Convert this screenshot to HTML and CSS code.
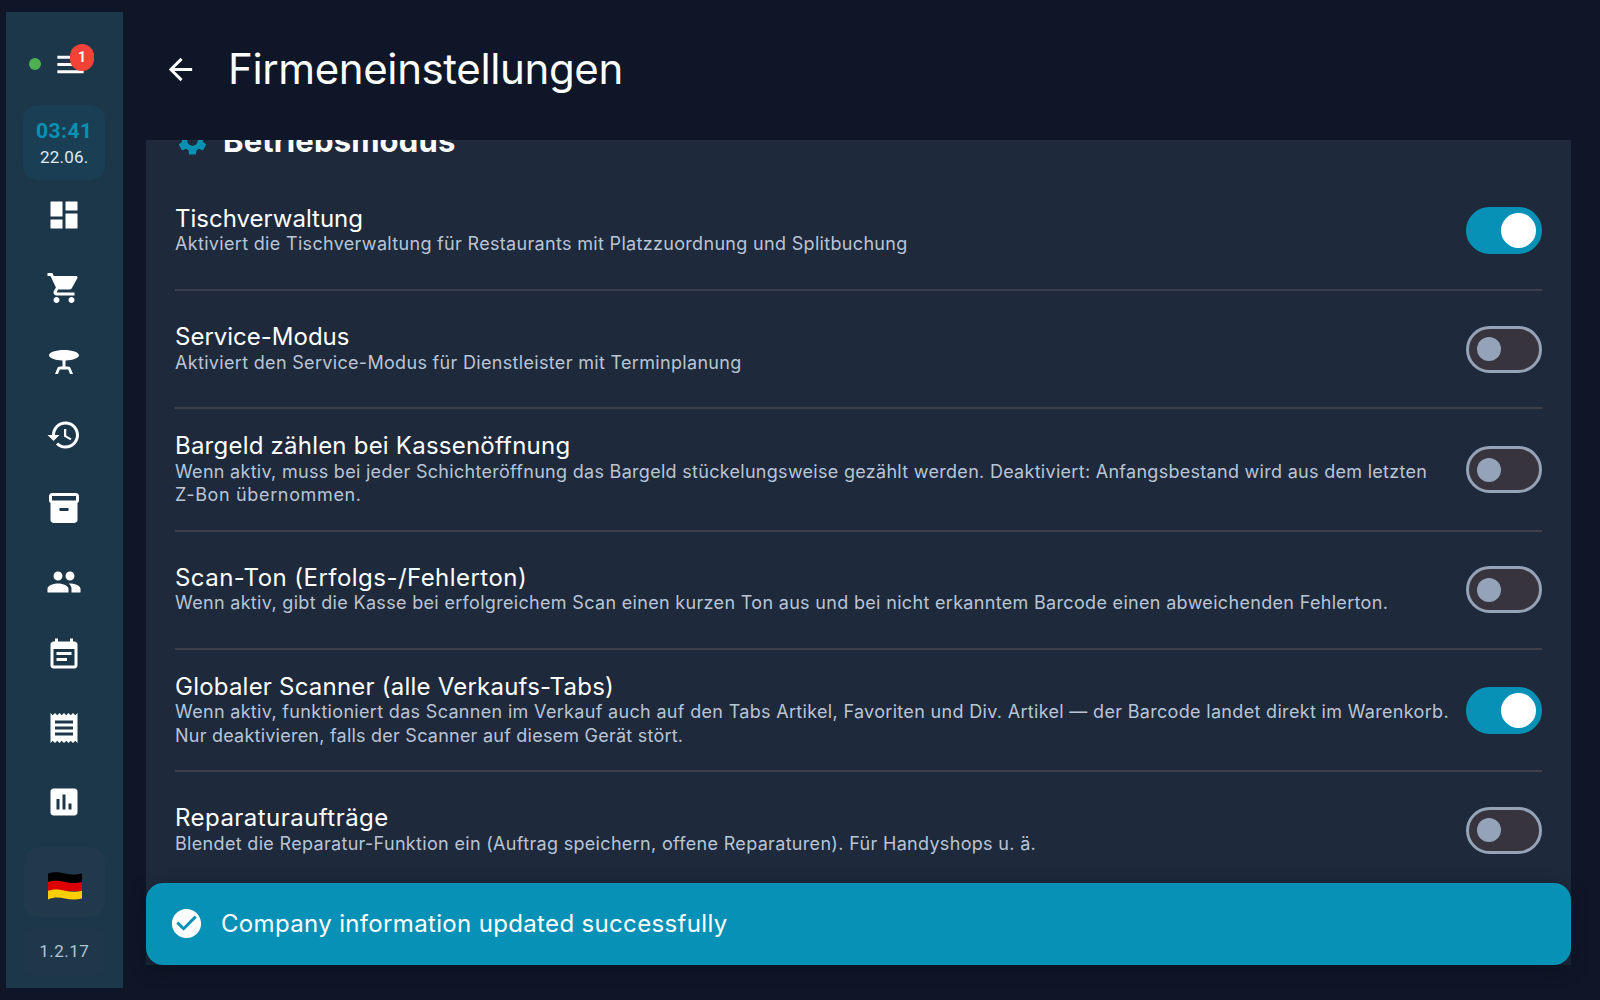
FILE: index.html
```html
<!DOCTYPE html>
<html lang="de">
<head>
<meta charset="utf-8">
<title>Firmeneinstellungen</title>
<link rel="stylesheet" href="styles.css">
</head>
<body>
<div class="app">
  <aside class="sidebar">
    <div class="status">
      <span class="online"></span>
      <span class="menu">
        <svg class="icon" viewBox="0 0 24 24"><path d="M3 18h18v-2H3v2zm0-5h18v-2H3v2zm0-7v2h18V6H3z"/></svg>
        <span class="badge">1</span>
      </span>
    </div>
    <div class="clock"><b>03:41</b><span>22.06.</span></div>
    <nav class="nav">
      <a><svg class="icon" viewBox="0 0 24 24"><path d="M3 13h8V3H3v10zm0 8h8v-6H3v6zm10 0h8V11h-8v10zm0-18v6h8V3h-8z"/></svg></a>
      <a><svg class="icon" viewBox="0 0 24 24"><path d="M7 18c-1.1 0-1.99.9-1.99 2S5.9 22 7 22s2-.9 2-2-.9-2-2-2zM1 2v2h2l3.6 7.59-1.35 2.45c-.16.28-.25.61-.25.96 0 1.1.9 2 2 2h12v-2H7.42c-.14 0-.25-.11-.25-.25l.03-.12.9-1.63h7.45c.75 0 1.41-.41 1.75-1.03l3.58-6.49c.08-.14.12-.31.12-.48 0-.55-.45-1-1-1H5.21l-.94-2H1zm16 16c-1.1 0-1.99.9-1.99 2s.89 2 1.99 2 2-.9 2-2-.9-2-2-2z"/></svg></a>
      <a><svg class="icon" viewBox="0 0 24 24"><path d="M22 7.5C22 5.57 17.52 4 12 4S2 5.57 2 7.5c0 1.81 3.95 3.31 9 3.48V15H9.35c-.82 0-1.55.5-1.86 1.26L6 20h2l1.2-3h5.6l1.2 3h2l-1.5-3.74c-.3-.76-1.03-1.26-1.85-1.26H13v-4.02c5.05-.17 9-1.67 9-3.48z"/></svg></a>
      <a><svg class="icon" viewBox="0 0 24 24"><path d="M13 3c-4.97 0-9 4.03-9 9H1l3.89 3.89.07.14L9 12H6c0-3.87 3.13-7 7-7s7 3.13 7 7-3.13 7-7 7c-1.93 0-3.68-.79-4.94-2.06l-1.42 1.42C8.27 19.99 10.51 21 13 21c4.97 0 9-4.03 9-9s-4.03-9-9-9zm-1 5v5l4.28 2.54.72-1.21-3.5-2.08V8H12z"/></svg></a>
      <a><svg class="icon" viewBox="0 0 24 24"><path d="M20 2H4c-1 0-2 .9-2 2v3.01c0 .72.43 1.34 1 1.69V20c0 1.1 1.1 2 2 2h14c.9 0 2-.9 2-2V8.7c.57-.35 1-.97 1-1.69V4c0-1.1-1-2-2-2zm-5 12H9v-2h6v2zm5-7H4V4h16v3z"/></svg></a>
      <a><svg class="icon" viewBox="0 0 24 24"><path d="M16 11c1.66 0 2.99-1.34 2.99-3S17.66 5 16 5s-3 1.34-3 3 1.34 3 3 3zm-8 0c1.66 0 2.99-1.34 2.99-3S9.66 5 8 5 5 6.34 5 8s1.34 3 3 3zm0 2c-2.33 0-7 1.17-7 3.5V19h14v-2.5c0-2.33-4.67-3.5-7-3.5zm8 0c-.29 0-.62.02-.97.05 1.16.84 1.97 1.97 1.97 3.45V19h6v-2.5c0-2.33-4.67-3.5-7-3.5z"/></svg></a>
      <a><svg class="icon" viewBox="0 0 24 24"><path d="M17 10H7v2h10v-2zm2-7h-1V1h-2v2H8V1H6v2H5c-1.11 0-1.99.9-1.99 2L3 19c0 1.1.89 2 2 2h14c1.1 0 2-.9 2-2V5c0-1.1-.9-2-2-2zm0 16H5V8h14v11zm-5-5H7v2h7v-2z"/></svg></a>
      <a><svg class="icon" viewBox="0 0 24 24"><path d="M18 17H6v-2h12v2zm0-4H6v-2h12v2zm0-4H6V7h12v2zM3 22l1.5-1.5L6 22l1.5-1.5L9 22l1.5-1.5L12 22l1.5-1.5L15 22l1.5-1.5L18 22l1.5-1.5L21 22V2l-1.5 1.5L18 2l-1.5 1.5L15 2l-1.5 1.5L12 2l-1.5 1.5L9 2 7.5 3.5 6 2 4.5 3.5 3 2v20z"/></svg></a>
      <a><svg class="icon" viewBox="0 0 24 24"><path d="M19 3H5c-1.1 0-2 .9-2 2v14c0 1.1.9 2 2 2h14c1.1 0 2-.9 2-2V5c0-1.1-.9-2-2-2zM9 17H7v-7h2v7zm4 0h-2V7h2v10zm4 0h-2v-4h2v4z"/></svg></a>
    </nav>
    <div class="lang">
      <svg width="34" height="28" viewBox="0 0 34 28">
        <path fill="#000" d="M0 1.6C6-.4 11 .3 17 1.6s11 1.500 17 0V11H0z"/>
        <path fill="#dd0000" d="M0 10.100C6 8.100 11 8.800 17 10.100s11 1.500 17 0V19H0z"/>
        <path fill="#ffce00" d="M0 18.700C6 16.700 11 17.400 17 18.700s11 1.500 17 0v7.700c-6 1.500-11 1.300-17 0s-11-1.500-17 1z"/>
      </svg>
    </div>
    <div class="version">1.2.17</div>
  </aside>

  <main class="main">
    <header class="header">
      <svg class="icon" viewBox="0 0 24 24"><path d="M20 11H7.830l5.590-5.590L12 4l-8 8 8 8 1.410-1.410L7.830 13H20v-2z"/></svg>
      <h1>Firmeneinstellungen</h1>
    </header>

    <section class="card">
      <div class="section-head">
        <svg class="icon" viewBox="0 0 24 24"><path d="M19.140 12.940c.04-.3.060-.61.060-.94 0-.32-.02-.64-.07-.94l2.030-1.580c.18-.14.230-.41.120-.61l-1.920-3.320c-.12-.22-.37-.29-.59-.22l-2.390.96c-.5-.38-1.030-.7-1.620-.94l-.36-2.540c-.04-.24-.24-.41-.48-.41h-3.840c-.24 0-.43.170-.47.410l-.36 2.540c-.59.240-1.130.570-1.620.940l-2.390-.96c-.22-.08-.47 0-.59.220L2.740 8.870c-.12.210-.08.470.120.610l2.030 1.580c-.05.300-.09.630-.09.940s.02.640.070.940l-2.030 1.580c-.18.140-.23.410-.12.610l1.920 3.320c.12.220.370.290.590.220l2.390-.96c.5.380 1.030.700 1.620.940l.36 2.540c.05.240.240.410.480.410h3.840c.24 0 .440-.17.470-.41l.36-2.540c.59-.24 1.130-.56 1.620-.94l2.390.960c.22.080.470 0 .590-.22l1.920-3.320c.12-.22.070-.47-.12-.61l-2.010-1.580zM12 15.600c-1.980 0-3.600-1.620-3.600-3.600s1.620-3.600 3.600-3.600 3.600 1.620 3.600 3.600-1.620 3.600-3.600 3.600z"/></svg>
        <h2>Betriebsmodus</h2>
      </div>
      <div class="rows">
        <div class="row">
          <div class="text"><h3 class="tight">Tischverwaltung</h3><p>Aktiviert die Tischverwaltung für Restaurants mit Platzzuordnung und Splitbuchung</p></div>
          <span class="switch on"></span>
        </div>
        <div class="row">
          <div class="text"><h3 class="tight">Service-Modus</h3><p>Aktiviert den Service-Modus für Dienstleister mit Terminplanung</p></div>
          <span class="switch"></span>
        </div>
        <div class="row tall">
          <div class="text"><h3>Bargeld zählen bei Kassenöffnung</h3><p class="snug">Wenn aktiv, muss bei jeder Schichteröffnung das Bargeld stückelungsweise gezählt werden. Deaktiviert: Anfangsbestand wird aus dem letzten</p><p class="wide">Z-Bon übernommen.</p></div>
          <span class="switch"></span>
        </div>
        <div class="row">
          <div class="text"><h3 class="wide">Scan-Ton (Erfolgs-/Fehlerton)</h3><p>Wenn aktiv, gibt die Kasse bei erfolgreichem Scan einen kurzen Ton aus und bei nicht erkanntem Barcode einen abweichenden Fehlerton.</p></div>
          <span class="switch"></span>
        </div>
        <div class="row tall">
          <div class="text"><h3>Globaler Scanner (alle Verkaufs-Tabs)</h3><p>Wenn aktiv, funktioniert das Scannen im Verkauf auch auf den Tabs Artikel, Favoriten und Div. Artikel — der Barcode landet direkt im Warenkorb.</p><p class="tight">Nur deaktivieren, falls der Scanner auf diesem Gerät stört.</p></div>
          <span class="switch on"></span>
        </div>
        <div class="row">
          <div class="text"><h3 class="wide">Reparaturaufträge</h3><p>Blendet die Reparatur-Funktion ein (Auftrag speichern, offene Reparaturen). Für Handyshops u. ä.</p></div>
          <span class="switch"></span>
        </div>
      </div>
    </section>
    <div class="toast">
      <svg class="icon" viewBox="0 0 24 24"><path d="M12 2C6.480 2 2 6.480 2 12s4.480 10 10 10 10-4.480 10-10S17.520 2 12 2zm-2 15l-5-5 1.410-1.410L10 14.170l7.590-7.590L19 8l-9 9z"/></svg>
      <span>Company information updated successfully</span>
    </div>
  </main>
</div>
</body>
</html>
```
FILE: styles.css
```css
* { box-sizing: border-box; }
body { margin: 0; background: #0e1628; color: #fff; font-family: Inter, "Noto Sans", sans-serif; }
h1, h2, h3, p { margin: 0; font-weight: 400; white-space: nowrap; }
.icon { display: block; flex: none; width: 35px; height: 35px; fill: currentColor; }
.app { display: flex; width: 1600px; height: 1000px; padding: 12px 29px 0 6px; overflow: hidden; }

.sidebar { display: flex; flex-direction: column; align-items: center; width: 116.500px; height: 976px; background: #1c364a; font-family: Roboto, sans-serif; }
.status { display: flex; align-items: center; align-self: stretch; gap: 12px; height: 93px; padding: 11px 0 0 23px; }
.online { width: 12px; height: 12px; border-radius: 50%; background: #4caf50; }
.menu { position: relative; }
.badge { position: absolute; left: 17px; top: -3px; width: 24px; height: 27px; border-radius: 12px; background: #f44336; font-size: 14px; font-weight: 700; line-height: 26px; text-align: center; }
.clock { display: flex; flex-direction: column; align-items: center; width: 82px; height: 75px; padding-top: 13px; border-radius: 15px; background: #1a3f54; }
.clock b { color: #0891b2; font-size: 21px; line-height: 26px; letter-spacing: 0.500px; }
.clock span { color: #e2e8f0; font-size: 17px; line-height: 26px; letter-spacing: 0.250px; }
.nav { display: flex; flex-direction: column; margin-top: -1.500px; }
.nav a { display: flex; align-items: center; height: 73.300px; }
.nav .icon { width: 36px; height: 36px; }
.lang { display: flex; align-items: center; justify-content: center; width: 81px; height: 70px; margin-top: 9px; padding: 7px 0 0 1px; border-radius: 15px; background: #22394c; }
.version { width: 81px; height: 46px; margin-top: 12px; border-radius: 9px; background: #1f374a; color: #b6c3d5; font-size: 17px; line-height: 45px; letter-spacing: 0.500px; text-align: center; }

.main { display: flex; flex-direction: column; flex: 1; margin-left: 23.500px; }
.header { display: flex; align-items: center; gap: 30px; height: 128px; padding: 0 0 13px 17px; }
.header h1 { padding-bottom: 2px; font-size: 42px; letter-spacing: -0.380px; }
.card { height: 825px; padding: 0 29px; background: #1e293b; overflow: hidden; }
.section-head { display: flex; align-items: center; gap: 13px; height: 35px; margin-top: -17px; color: #0891b2; }
.section-head h2 { color: #fff; font-size: 31px; font-weight: 700; letter-spacing: 0.150px; line-height: 35px; }
.rows { padding-top: 15px; }
.row { display: flex; align-items: center; justify-content: space-between; height: 118px; border-bottom: 2px solid #3d3f4b; }
.row:first-child { padding-bottom: 1px; }
.row.tall { height: 122.500px; padding-top: 1px; }
.row:last-child { border-bottom: 0; padding-bottom: 2px; }
.text { width: 1274px; }
.row h3 { font-size: 24px; line-height: 26.500px; letter-spacing: 0.220px; }
.row h3.tight { letter-spacing: 0; }
.row h3.wide { letter-spacing: 0.460px; }
.row p { color: #b9c5d6; font-size: 18px; line-height: 23.400px; letter-spacing: 0.320px; }
.row p.snug { letter-spacing: 0.290px; }
.row p.tight { letter-spacing: 0.230px; }
.row p.wide { letter-spacing: 0.650px; }
.switch { flex: none; display: flex; align-items: center; width: 76px; height: 47px; padding-left: 8px; border: 3.500px solid #94a3b8; border-radius: 24px; background: #38343d; }
.switch::before { content: ""; width: 24px; height: 24px; border-radius: 50%; background: #94a3b8; }
.switch.on { padding-left: 32px; border-color: #0891b6; background: #0891b6; }
.switch.on::before { width: 35px; height: 35px; background: #fff; }
.toast { position: relative; display: flex; flex: none; align-items: center; gap: 17px; height: 82px; margin-top: -82px; padding: 0 0 1px 23px; border-radius: 17px; background: #0891b6; box-shadow: 0 6px 16px rgba(8, 18, 26, 0.600); font-size: 24px; letter-spacing: 0.340px; }
```
